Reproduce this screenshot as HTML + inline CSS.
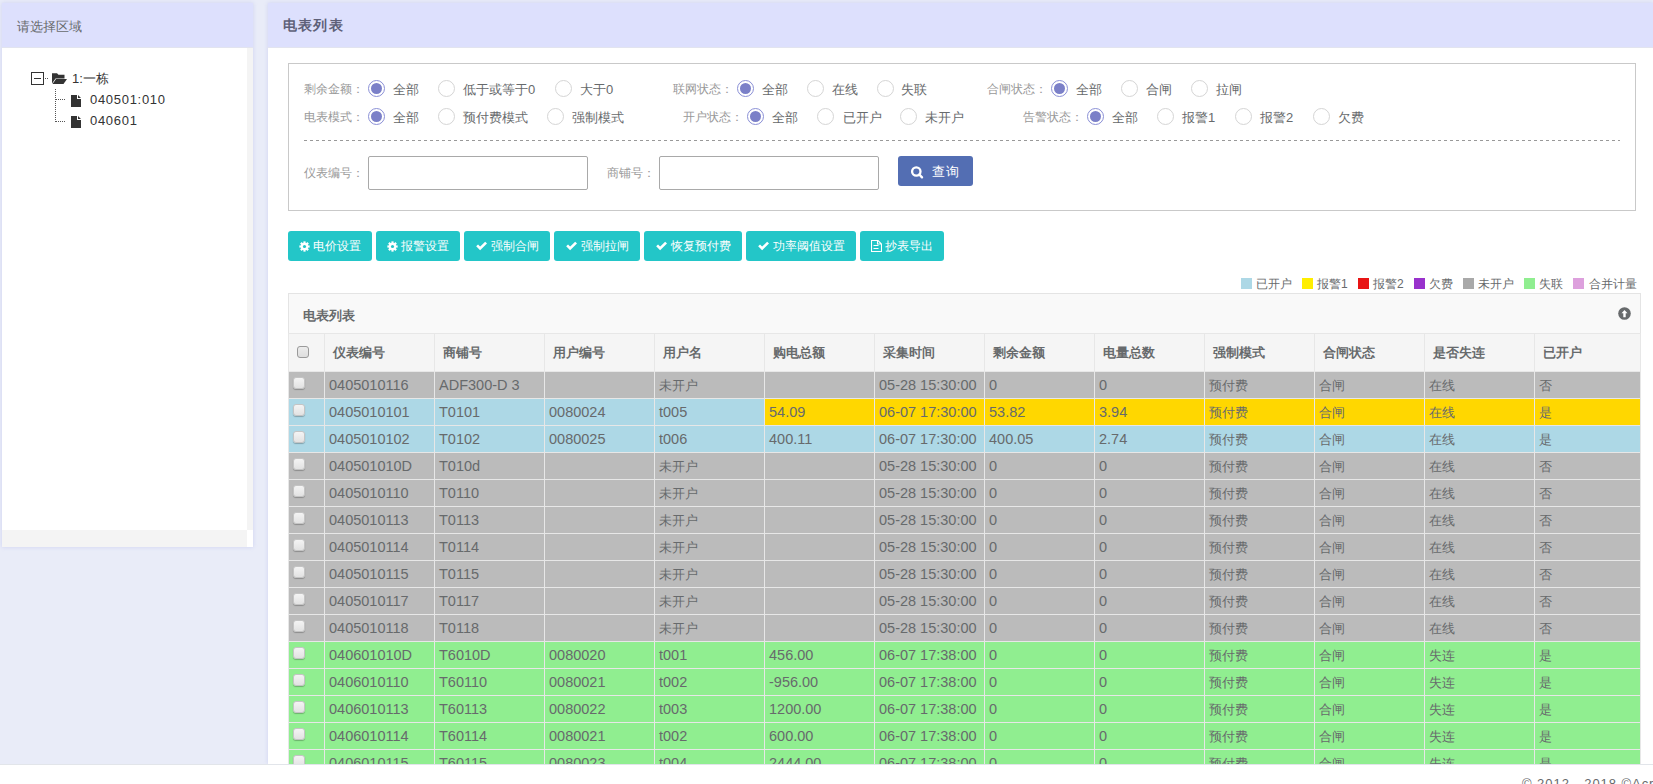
<!DOCTYPE html><html><head><meta charset="utf-8"><title>电表列表</title><style>
*{box-sizing:border-box;margin:0;padding:0}
html,body{width:1653px;height:784px;overflow:hidden}
body{background:#e9ecf8;font-family:"Liberation Sans",sans-serif;color:#676a6c;font-size:13px;position:relative}
.abs{position:absolute}
.panel{position:absolute;background:#fff;box-shadow:0 0 4px rgba(196,200,240,0.75)}
.phead{position:absolute;left:0;right:0;top:0;height:45px;background:#dde0fd;border-bottom:1px solid #e2e4ef}
.phead span{position:absolute;left:15px;top:16px;font-size:13px;line-height:16px;color:#676a6c}
.lp{left:2px;top:3px;width:251px;height:544px}
.rp{left:268px;top:3px;width:1385px;height:761px}
.vscroll{position:absolute;left:245px;top:45px;width:6px;height:482px;background:#f4f4f4}
.hscroll{position:absolute;left:0;top:527px;width:245px;height:17px;background:#f4f4f4}
.footer{position:absolute;left:0;top:764px;width:1653px;height:20px;background:#fff;border-top:1px solid #e2e5ea}
.footer span{position:absolute;left:1522px;top:11px;font-size:13px;letter-spacing:0.95px;color:#676a6c;white-space:nowrap}
/* tree */
.tree{position:absolute;font-size:13px;color:#333;letter-spacing:0.7px;white-space:nowrap;line-height:16px}
/* filter box */
.fbox{position:absolute;left:288px;top:63px;width:1348px;height:148px;border:1px solid #c9c9c9}
.lbl{position:absolute;font-size:12px;color:#999;white-space:nowrap;line-height:14px}
.rt{position:absolute;font-size:13px;color:#676a6c;white-space:nowrap;line-height:16px}
.radio{position:absolute;width:17px;height:17px;border-radius:50%;border:1px solid #d5d5d5;background:#fff}
.radio.on{border-color:#8a8fd6}
.radio.on:after{content:"";position:absolute;left:2px;top:2px;width:11px;height:11px;border-radius:50%;background:#7b80c8}
.dash{position:absolute;left:304px;top:140px;width:1316px;height:1px;background-image:linear-gradient(to right,#999 50%,transparent 50%);background-size:6px 1px}
.inp{position:absolute;top:156px;width:220px;height:34px;border:1px solid #a9a9a9;border-radius:2px;background:#fff}
.qbtn{position:absolute;left:898px;top:156px;width:75px;height:30px;background:#536eb3;border-radius:3px;color:#fff;font-size:13px}
/* buttons */
.btn{position:absolute;top:231px;height:30px;background:#23c6c8;border-radius:3px;color:#fff;font-size:12px;line-height:30px;white-space:nowrap}
.legend{position:absolute;top:277px;height:14px;font-size:12px;line-height:14px;white-space:nowrap;color:#676a6c}
.sw{position:absolute;top:0;width:11px;height:11px}
/* table */
.tbox{position:absolute;left:288px;top:293px;width:1353px;height:471px;overflow:hidden}
.ttitle{position:absolute;left:0;top:0;width:1353px;height:41px;background:#f9f9f9;border:1px solid #e4e4e4}
.ttitle b{position:absolute;left:14px;top:14px;font-size:13px;line-height:16px;color:#676a6c}
table{position:absolute;left:0;top:40px;border-collapse:collapse;table-layout:fixed;width:1353px}
td,th{border:1px solid #e7e7e7;white-space:nowrap;overflow:hidden;text-align:left}
th{height:38px;line-height:16px;background:#f5f5f5;font-weight:bold;font-size:13px;padding-left:8px;color:#676a6c}
td{height:27px;line-height:17px;font-size:14.5px;padding-left:4px;color:#676a6c}
.cb{display:block;position:relative;width:11px;height:11px;border-radius:3px;border:1px solid #c4c4c4;background:linear-gradient(#f4f4f4,#e2e2e2);box-shadow:0 1px 1px rgba(0,0,0,0.25)}
tr.g td{background:#bbbbbb}
tr.b td{background:#add8e6}
tr.n td{background:#90ee90}
td.y{background:#ffd700 !important}
td.zh{font-size:13px;padding-top:1px}
</style></head><body>
<div class="panel lp"><div class="phead"><span>请选择区域</span></div><div class="vscroll"></div><div class="hscroll"></div></div>
<svg class="abs" style="left:30px;top:70px" width="60" height="60" viewBox="0 0 60 60">
<rect x="1.5" y="2.5" width="12" height="12" fill="#fff" stroke="#333" stroke-width="1"/>
<line x1="4" y1="8.5" x2="11" y2="8.5" stroke="#333" stroke-width="1"/>
<line x1="15" y1="8.5" x2="18" y2="8.5" stroke="#555" stroke-width="1" stroke-dasharray="1 1"/>
<line x1="25.5" y1="19" x2="25.5" y2="52" stroke="#555" stroke-width="1" stroke-dasharray="1 1"/>
<line x1="26" y1="29.5" x2="36" y2="29.5" stroke="#555" stroke-width="1" stroke-dasharray="1 1"/>
<line x1="26" y1="51.5" x2="36" y2="51.5" stroke="#555" stroke-width="1" stroke-dasharray="1 1"/>
<path d="M22 3.2 h5 l1.5 1.5 h6 v3.8 h-9 l-3.5 5 z" fill="#333"/>
<path d="M22.5 14 l3.5 -5 h11 l-3.5 5 z" fill="#333"/>
<path d="M41 25 h6 v4 h4 v8 h-10 z M48 25 l3 3 h-3 z" fill="#333"/>
<path d="M41 46 h6 v4 h4 v8 h-10 z M48 46 l3 3 h-3 z" fill="#333"/>
</svg>
<div class="tree" style="left:72px;top:71px;letter-spacing:0">1:一栋</div>
<div class="tree" style="left:90px;top:92px">040501:010</div>
<div class="tree" style="left:90px;top:113px">040601</div>
<div class="panel rp"><div class="phead"><span style="font-weight:bold;font-size:14px;top:14px;letter-spacing:1.2px;color:#5e6078">电表列表</span></div></div>
<div class="fbox"></div>
<div class="lbl" style="left:304px;top:82px">剩余金额：</div>
<div class="radio on" style="left:368px;top:80px"></div>
<div class="rt" style="left:393px;top:82px">全部</div>
<div class="radio" style="left:438px;top:80px"></div>
<div class="rt" style="left:463px;top:82px">低于或等于0</div>
<div class="radio" style="left:555px;top:80px"></div>
<div class="rt" style="left:580px;top:82px">大于0</div>
<div class="lbl" style="left:673px;top:82px">联网状态：</div>
<div class="radio on" style="left:737px;top:80px"></div>
<div class="rt" style="left:762px;top:82px">全部</div>
<div class="radio" style="left:807px;top:80px"></div>
<div class="rt" style="left:832px;top:82px">在线</div>
<div class="radio" style="left:877px;top:80px"></div>
<div class="rt" style="left:901px;top:82px">失联</div>
<div class="lbl" style="left:987px;top:82px">合闸状态：</div>
<div class="radio on" style="left:1051px;top:80px"></div>
<div class="rt" style="left:1076px;top:82px">全部</div>
<div class="radio" style="left:1121px;top:80px"></div>
<div class="rt" style="left:1146px;top:82px">合闸</div>
<div class="radio" style="left:1191px;top:80px"></div>
<div class="rt" style="left:1216px;top:82px">拉闸</div>
<div class="lbl" style="left:304px;top:110px">电表模式：</div>
<div class="radio on" style="left:368px;top:108px"></div>
<div class="rt" style="left:393px;top:110px">全部</div>
<div class="radio" style="left:438px;top:108px"></div>
<div class="rt" style="left:463px;top:110px">预付费模式</div>
<div class="radio" style="left:547px;top:108px"></div>
<div class="rt" style="left:572px;top:110px">强制模式</div>
<div class="lbl" style="left:683px;top:110px">开户状态：</div>
<div class="radio on" style="left:747px;top:108px"></div>
<div class="rt" style="left:772px;top:110px">全部</div>
<div class="radio" style="left:817px;top:108px"></div>
<div class="rt" style="left:843px;top:110px">已开户</div>
<div class="radio" style="left:900px;top:108px"></div>
<div class="rt" style="left:925px;top:110px">未开户</div>
<div class="lbl" style="left:1023px;top:110px">告警状态：</div>
<div class="radio on" style="left:1087px;top:108px"></div>
<div class="rt" style="left:1112px;top:110px">全部</div>
<div class="radio" style="left:1157px;top:108px"></div>
<div class="rt" style="left:1182px;top:110px">报警1</div>
<div class="radio" style="left:1235px;top:108px"></div>
<div class="rt" style="left:1260px;top:110px">报警2</div>
<div class="radio" style="left:1313px;top:108px"></div>
<div class="rt" style="left:1338px;top:110px">欠费</div>
<div class="dash"></div>
<div class="lbl" style="left:304px;top:166px">仪表编号：</div><div class="inp" style="left:368px"></div>
<div class="lbl" style="left:607px;top:166px">商铺号：</div><div class="inp" style="left:659px"></div>
<div class="qbtn"><svg class="abs" style="left:13px;top:10px" width="13" height="13" viewBox="0 0 13 13"><circle cx="5.3" cy="5.5" r="4.2" fill="none" stroke="#fff" stroke-width="2.3"/><line x1="8.3" y1="8.5" x2="11" y2="11.3" stroke="#fff" stroke-width="2.4" stroke-linecap="round"/></svg><span class="abs" style="left:34px;top:8px;line-height:16px;letter-spacing:1px">查询</span></div>
<div class="btn" style="left:288px;width:84px;text-align:center"><svg width="11" height="11" viewBox="0 0 12 12" style="vertical-align:-1.5px;margin-right:3px"><g fill="#fff"><circle cx="6" cy="6" r="4"/><rect x="4.8" y="0.4" width="2.4" height="3" transform="rotate(0 6 6)"/><rect x="4.8" y="0.4" width="2.4" height="3" transform="rotate(45 6 6)"/><rect x="4.8" y="0.4" width="2.4" height="3" transform="rotate(90 6 6)"/><rect x="4.8" y="0.4" width="2.4" height="3" transform="rotate(135 6 6)"/><rect x="4.8" y="0.4" width="2.4" height="3" transform="rotate(180 6 6)"/><rect x="4.8" y="0.4" width="2.4" height="3" transform="rotate(225 6 6)"/><rect x="4.8" y="0.4" width="2.4" height="3" transform="rotate(270 6 6)"/><rect x="4.8" y="0.4" width="2.4" height="3" transform="rotate(315 6 6)"/></g><circle cx="6" cy="6" r="1.7" fill="#23c6c8"/></svg>电价设置</div>
<div class="btn" style="left:376px;width:84px;text-align:center"><svg width="11" height="11" viewBox="0 0 12 12" style="vertical-align:-1.5px;margin-right:3px"><g fill="#fff"><circle cx="6" cy="6" r="4"/><rect x="4.8" y="0.4" width="2.4" height="3" transform="rotate(0 6 6)"/><rect x="4.8" y="0.4" width="2.4" height="3" transform="rotate(45 6 6)"/><rect x="4.8" y="0.4" width="2.4" height="3" transform="rotate(90 6 6)"/><rect x="4.8" y="0.4" width="2.4" height="3" transform="rotate(135 6 6)"/><rect x="4.8" y="0.4" width="2.4" height="3" transform="rotate(180 6 6)"/><rect x="4.8" y="0.4" width="2.4" height="3" transform="rotate(225 6 6)"/><rect x="4.8" y="0.4" width="2.4" height="3" transform="rotate(270 6 6)"/><rect x="4.8" y="0.4" width="2.4" height="3" transform="rotate(315 6 6)"/></g><circle cx="6" cy="6" r="1.7" fill="#23c6c8"/></svg>报警设置</div>
<div class="btn" style="left:464px;width:86px;text-align:center"><svg width="11" height="10" viewBox="0 0 12 10" style="vertical-align:-1px;margin-right:4px"><path d="M1.2 4.3 L4.5 7.6 L11 1.3" fill="none" stroke="#fff" stroke-width="2.9"/></svg>强制合闸</div>
<div class="btn" style="left:554px;width:86px;text-align:center"><svg width="11" height="10" viewBox="0 0 12 10" style="vertical-align:-1px;margin-right:4px"><path d="M1.2 4.3 L4.5 7.6 L11 1.3" fill="none" stroke="#fff" stroke-width="2.9"/></svg>强制拉闸</div>
<div class="btn" style="left:644px;width:98px;text-align:center"><svg width="11" height="10" viewBox="0 0 12 10" style="vertical-align:-1px;margin-right:4px"><path d="M1.2 4.3 L4.5 7.6 L11 1.3" fill="none" stroke="#fff" stroke-width="2.9"/></svg>恢复预付费</div>
<div class="btn" style="left:746px;width:110px;text-align:center"><svg width="11" height="10" viewBox="0 0 12 10" style="vertical-align:-1px;margin-right:4px"><path d="M1.2 4.3 L4.5 7.6 L11 1.3" fill="none" stroke="#fff" stroke-width="2.9"/></svg>功率阈值设置</div>
<div class="btn" style="left:860px;width:84px;text-align:center"><svg width="11" height="12" viewBox="0 0 11 12" style="vertical-align:-2px;margin-right:3px"><path d="M0.5 0.5 h6.5 l3.5 3.5 v7.5 h-10 z M6.5 0.5 v3.5 h4" fill="none" stroke="#fff" stroke-width="1.1"/><path d="M2.5 5.5 h5 M2.5 8.5 h5" stroke="#fff" stroke-width="1"/></svg>抄表导出</div>
<div class="sw abs" style="left:1241px;top:278px;background:#add8e6"></div><div class="legend" style="left:1256px">已开户</div>
<div class="sw abs" style="left:1302px;top:278px;background:#ffee00"></div><div class="legend" style="left:1317px">报警1</div>
<div class="sw abs" style="left:1358px;top:278px;background:#e81414"></div><div class="legend" style="left:1373px">报警2</div>
<div class="sw abs" style="left:1414px;top:278px;background:#9932cc"></div><div class="legend" style="left:1429px">欠费</div>
<div class="sw abs" style="left:1463px;top:278px;background:#a9a9a9"></div><div class="legend" style="left:1478px">未开户</div>
<div class="sw abs" style="left:1524px;top:278px;background:#90ee90"></div><div class="legend" style="left:1539px">失联</div>
<div class="sw abs" style="left:1573px;top:278px;background:#dda0dd"></div><div class="legend" style="left:1589px">合并计量</div>
<div class="tbox"><div class="ttitle"><b>电表列表</b><svg class="abs" style="left:1329px;top:13px" width="13" height="13" viewBox="0 0 13 13"><circle cx="6.5" cy="6.5" r="6.3" fill="#676a6c"/><path d="M6.5 3 L9.5 6.2 H7.7 V10.2 H5.3 V6.2 H3.5 Z" fill="#fff"/></svg></div>
<table><colgroup><col style="width:36px"><col style="width:110px"><col style="width:110px"><col style="width:110px"><col style="width:110px"><col style="width:110px"><col style="width:110px"><col style="width:110px"><col style="width:110px"><col style="width:110px"><col style="width:110px"><col style="width:110px"><col style="width:106px"></colgroup>
<tr><th style="padding-left:8px"><span class="cb" style="width:12px;height:12px;top:-1px;background:linear-gradient(#ececec,#dedede);border-color:#9a9a9a;box-shadow:none"></span></th><th>仪表编号</th><th>商铺号</th><th>用户编号</th><th>用户名</th><th>购电总额</th><th>采集时间</th><th>剩余金额</th><th>电量总数</th><th>强制模式</th><th>合闸状态</th><th>是否失连</th><th>已开户</th></tr>
<tr class="g"><td style="padding-left:4px"><span class="cb" style="top:-2px;width:12px;height:12px"></span></td><td>0405010116</td><td>ADF300-D 3</td><td></td><td class="zh">未开户</td><td></td><td>05-28 15:30:00</td><td>0</td><td>0</td><td class="zh">预付费</td><td class="zh">合闸</td><td class="zh">在线</td><td class="zh">否</td></tr>
<tr class="b"><td style="padding-left:4px"><span class="cb" style="top:-2px;width:12px;height:12px"></span></td><td>0405010101</td><td>T0101</td><td>0080024</td><td>t005</td><td class="y">54.09</td><td class="y">06-07 17:30:00</td><td class="y">53.82</td><td class="y">3.94</td><td class="y zh">预付费</td><td class="y zh">合闸</td><td class="y zh">在线</td><td class="y zh">是</td></tr>
<tr class="b"><td style="padding-left:4px"><span class="cb" style="top:-2px;width:12px;height:12px"></span></td><td>0405010102</td><td>T0102</td><td>0080025</td><td>t006</td><td>400.11</td><td>06-07 17:30:00</td><td>400.05</td><td>2.74</td><td class="zh">预付费</td><td class="zh">合闸</td><td class="zh">在线</td><td class="zh">是</td></tr>
<tr class="g"><td style="padding-left:4px"><span class="cb" style="top:-2px;width:12px;height:12px"></span></td><td>040501010D</td><td>T010d</td><td></td><td class="zh">未开户</td><td></td><td>05-28 15:30:00</td><td>0</td><td>0</td><td class="zh">预付费</td><td class="zh">合闸</td><td class="zh">在线</td><td class="zh">否</td></tr>
<tr class="g"><td style="padding-left:4px"><span class="cb" style="top:-2px;width:12px;height:12px"></span></td><td>0405010110</td><td>T0110</td><td></td><td class="zh">未开户</td><td></td><td>05-28 15:30:00</td><td>0</td><td>0</td><td class="zh">预付费</td><td class="zh">合闸</td><td class="zh">在线</td><td class="zh">否</td></tr>
<tr class="g"><td style="padding-left:4px"><span class="cb" style="top:-2px;width:12px;height:12px"></span></td><td>0405010113</td><td>T0113</td><td></td><td class="zh">未开户</td><td></td><td>05-28 15:30:00</td><td>0</td><td>0</td><td class="zh">预付费</td><td class="zh">合闸</td><td class="zh">在线</td><td class="zh">否</td></tr>
<tr class="g"><td style="padding-left:4px"><span class="cb" style="top:-2px;width:12px;height:12px"></span></td><td>0405010114</td><td>T0114</td><td></td><td class="zh">未开户</td><td></td><td>05-28 15:30:00</td><td>0</td><td>0</td><td class="zh">预付费</td><td class="zh">合闸</td><td class="zh">在线</td><td class="zh">否</td></tr>
<tr class="g"><td style="padding-left:4px"><span class="cb" style="top:-2px;width:12px;height:12px"></span></td><td>0405010115</td><td>T0115</td><td></td><td class="zh">未开户</td><td></td><td>05-28 15:30:00</td><td>0</td><td>0</td><td class="zh">预付费</td><td class="zh">合闸</td><td class="zh">在线</td><td class="zh">否</td></tr>
<tr class="g"><td style="padding-left:4px"><span class="cb" style="top:-2px;width:12px;height:12px"></span></td><td>0405010117</td><td>T0117</td><td></td><td class="zh">未开户</td><td></td><td>05-28 15:30:00</td><td>0</td><td>0</td><td class="zh">预付费</td><td class="zh">合闸</td><td class="zh">在线</td><td class="zh">否</td></tr>
<tr class="g"><td style="padding-left:4px"><span class="cb" style="top:-2px;width:12px;height:12px"></span></td><td>0405010118</td><td>T0118</td><td></td><td class="zh">未开户</td><td></td><td>05-28 15:30:00</td><td>0</td><td>0</td><td class="zh">预付费</td><td class="zh">合闸</td><td class="zh">在线</td><td class="zh">否</td></tr>
<tr class="n"><td style="padding-left:4px"><span class="cb" style="top:-2px;width:12px;height:12px"></span></td><td>040601010D</td><td>T6010D</td><td>0080020</td><td>t001</td><td>456.00</td><td>06-07 17:38:00</td><td>0</td><td>0</td><td class="zh">预付费</td><td class="zh">合闸</td><td class="zh">失连</td><td class="zh">是</td></tr>
<tr class="n"><td style="padding-left:4px"><span class="cb" style="top:-2px;width:12px;height:12px"></span></td><td>0406010110</td><td>T60110</td><td>0080021</td><td>t002</td><td>-956.00</td><td>06-07 17:38:00</td><td>0</td><td>0</td><td class="zh">预付费</td><td class="zh">合闸</td><td class="zh">失连</td><td class="zh">是</td></tr>
<tr class="n"><td style="padding-left:4px"><span class="cb" style="top:-2px;width:12px;height:12px"></span></td><td>0406010113</td><td>T60113</td><td>0080022</td><td>t003</td><td>1200.00</td><td>06-07 17:38:00</td><td>0</td><td>0</td><td class="zh">预付费</td><td class="zh">合闸</td><td class="zh">失连</td><td class="zh">是</td></tr>
<tr class="n"><td style="padding-left:4px"><span class="cb" style="top:-2px;width:12px;height:12px"></span></td><td>0406010114</td><td>T60114</td><td>0080021</td><td>t002</td><td>600.00</td><td>06-07 17:38:00</td><td>0</td><td>0</td><td class="zh">预付费</td><td class="zh">合闸</td><td class="zh">失连</td><td class="zh">是</td></tr>
<tr class="n"><td style="padding-left:4px"><span class="cb" style="top:-2px;width:12px;height:12px"></span></td><td>0406010115</td><td>T60115</td><td>0080023</td><td>t004</td><td>2444.00</td><td>06-07 17:38:00</td><td>0</td><td>0</td><td class="zh">预付费</td><td class="zh">合闸</td><td class="zh">失连</td><td class="zh">是</td></tr>
</table></div>
<div class="footer"><span>© 2012 - 2018 ©Acrel</span></div>
</body></html>
